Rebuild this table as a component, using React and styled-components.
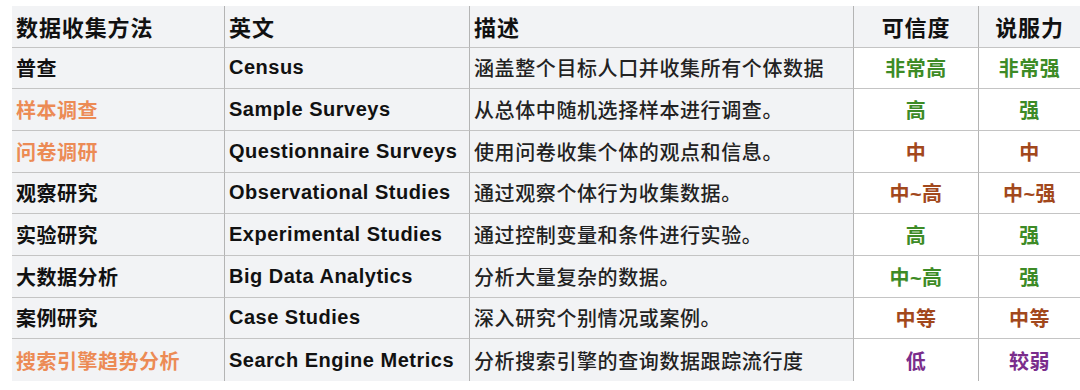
import React from "react";
import styled, { createGlobalStyle } from "styled-components";

const Global = createGlobalStyle`
  html, body { margin: 0; padding: 0; background: #ffffff; }
  body { padding: 6px 0 0 12px; font-family: "Liberation Sans", "Noto Sans CJK SC", sans-serif; }
`;

const Grid = styled.div`
  display: grid;
  width: 1068px;
  grid-template-columns: 213px 245px 384px 125px 101px;
  grid-template-rows: repeat(9, 41.67px);
  background: #f2f3f5;
`;

const Cell = styled.div`
  display: flex;
  align-items: center;
  justify-content: ${(p) => (p.$center ? "center" : "flex-start")};
  padding: 0 4px;
  box-sizing: border-box;
  border-right: ${(p) => (p.$last ? "none" : "1px solid #b4b4b4")};
  border-bottom: ${(p) => (p.$bottom ? "none" : "1.5px solid #c4c4c4")};
  background: ${(p) => (p.$white ? "#ffffff" : "transparent")};
  color: ${(p) => p.$color || "#111111"};
  font-size: ${(p) => (p.$head ? "22px" : "20px")};
  font-weight: ${(p) => (p.$normal ? 500 : 700)};
  letter-spacing: ${(p) => (p.$head ? "0.9px" : p.$normal ? "0.6px" : "0.5px")};
  white-space: nowrap;
  overflow: hidden;
`;

const GREEN = "#3d8b26";
const BROWN = "#a2481c";
const PURPLE = "#7a2d8c";
const ORANGE = "#ec8b55";

const rows = [
  ["普查", null, "Census", "涵盖整个目标人口并收集所有个体数据", ["非常高", GREEN], ["非常强", GREEN]],
  ["样本调查", ORANGE, "Sample Surveys", "从总体中随机选择样本进行调查。", ["高", GREEN], ["强", GREEN]],
  ["问卷调研", ORANGE, "Questionnaire Surveys", "使用问卷收集个体的观点和信息。", ["中", BROWN], ["中", BROWN]],
  ["观察研究", null, "Observational Studies", "通过观察个体行为收集数据。", ["中~高", BROWN], ["中~强", BROWN]],
  ["实验研究", null, "Experimental Studies", "通过控制变量和条件进行实验。", ["高", GREEN], ["强", GREEN]],
  ["大数据分析", null, "Big Data Analytics", "分析大量复杂的数据。", ["中~高", GREEN], ["强", GREEN]],
  ["案例研究", null, "Case Studies", "深入研究个别情况或案例。", ["中等", BROWN], ["中等", BROWN]],
  ["搜索引擎趋势分析", ORANGE, "Search Engine Metrics", "分析搜索引擎的查询数据跟踪流行度", ["低", PURPLE], ["较弱", PURPLE]],
];

export default function App() {
  return (
    <>
      <Global />
      <Grid>
        <Cell $head>数据收集方法</Cell>
        <Cell $head>英文</Cell>
        <Cell $head>描述</Cell>
        <Cell $head $center>可信度</Cell>
        <Cell $head $center $last>说服力</Cell>
        {rows.map((r, i) => {
          const bottom = i === rows.length - 1;
          return (
            <React.Fragment key={i}>
              <Cell $bottom={bottom} $color={r[1]}>{r[0]}</Cell>
              <Cell $bottom={bottom}>{r[2]}</Cell>
              <Cell $bottom={bottom} $normal $color="#222222">{r[3]}</Cell>
              <Cell $bottom={bottom} $center $white $color={r[4][1]}>{r[4][0]}</Cell>
              <Cell $bottom={bottom} $center $white $last $color={r[5][1]}>{r[5][0]}</Cell>
            </React.Fragment>
          );
        })}
      </Grid>
    </>
  );
}
